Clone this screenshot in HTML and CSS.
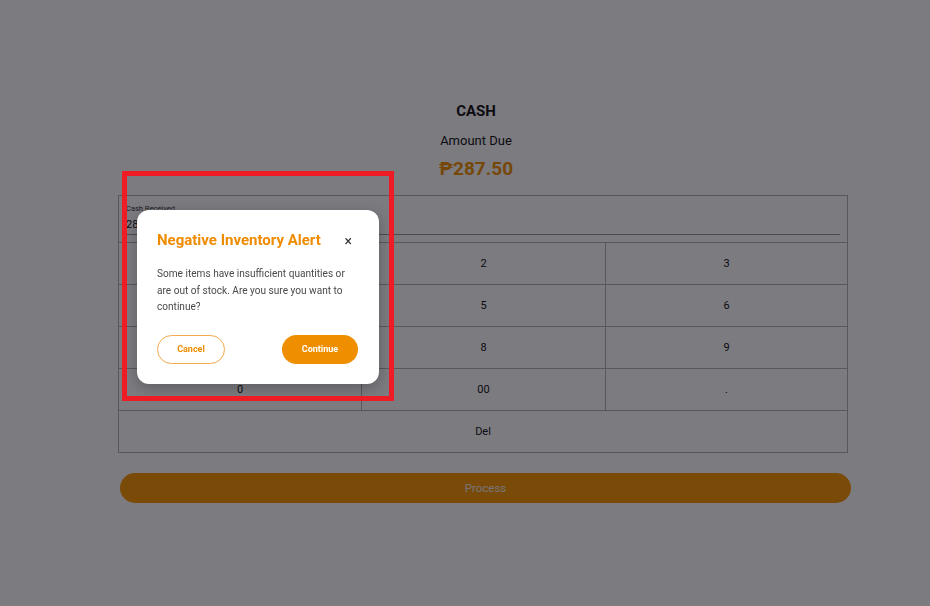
FILE: index.html
```html
<!DOCTYPE html>
<html lang="en">
<head>
  <meta charset="UTF-8" />
  <title>POS - Cash Payment</title>
  <link rel="stylesheet" href="styles.css">
</head>
<body>

  <main class="payment">
    <div class="summary">
      <h2 class="method">CASH</h2>
      <div class="due-label">Amount Due</div>
      <div class="due-amount">₱287.50</div>
    </div>

    <div class="keypad">
      <div class="cash-field">
        <label>Cash Received</label>
        <div class="cash-value">287.50</div>
      </div>
      <div class="keys">
        <button class="key">1</button>
        <button class="key">2</button>
        <button class="key">3</button>
        <button class="key">4</button>
        <button class="key">5</button>
        <button class="key">6</button>
        <button class="key">7</button>
        <button class="key">8</button>
        <button class="key">9</button>
        <button class="key">0</button>
        <button class="key">00</button>
        <button class="key">.</button>
        <button class="key wide">Del</button>
      </div>
    </div>

    <button class="process-btn">Process</button>
  </main>

  <!-- Confirm dialog -->
  <div class="backdrop">
    <div class="dialog">
      <div class="dialog-head">
        <h3>Negative Inventory Alert</h3>
        <span class="close">&times;</span>
      </div>
      <p>Some items have insufficient quantities or are out of stock. Are you sure you want to continue?</p>
      <div class="dialog-actions">
        <button class="btn-cancel">Cancel</button>
        <button class="btn-continue">Continue</button>
      </div>
    </div>
  </div>

  <!-- review marker -->
  <div class="marker"></div>

</body>
</html>
```

FILE: styles.css
```css
/* Base */
* {
  margin: 0; padding: 0; box-sizing: border-box;
}
body {
  font-family: Roboto, "Liberation Sans", Arial, sans-serif;
  background: #fff;
  color: #222;
  width: 930px;
  height: 606px;
  overflow: hidden;
}
button {
  font-family: inherit;
  border: none;
  background: none;
  cursor: pointer;
}

/* Payment page */
.payment {
  width: 733px;
  margin-left: 118px;
  padding-top: 101px;
}
.summary {
  text-align: center;
  padding-right: 17px;
}
.method {
  font-size: 15px;
  font-weight: bold;
  line-height: 20px;
  color: #111;
}
.due-label {
  margin-top: 11px;
  font-size: 13px;
  line-height: 17px;
  color: #111;
}
.due-amount {
  margin-top: 8px;
  font-size: 19px;
  font-weight: bold;
  line-height: 24px;
  color: #f39200;
}

.keypad {
  margin-top: 14px;
  width: 730px;
  border: 1px solid #b2b2b2;
}
.cash-field {
  padding: 8px 7px 7px 7px;
  border-bottom: 1px solid #b2b2b2;
}
.cash-field label {
  display: block;
  font-size: 7.5px;
  line-height: 9px;
  color: #333;
}
.cash-value {
  font-size: 11px;
  line-height: 15px;
  padding-top: 4px;
  padding-bottom: 2px;
  border-bottom: 1px solid #999;
  color: #111;
}
.keys {
  display: grid;
  grid-template-columns: 243px 244px 1fr;
}
.key {
  height: 42px;
  font-size: 11px;
  color: #111;
  border-right: 1px solid #b2b2b2;
  border-bottom: 1px solid #b2b2b2;
}
.key:nth-child(3n) {
  border-right: none;
}
.key.wide {
  grid-column: 1 / -1;
  height: 41px;
  border: none;
}

.process-btn {
  display: block;
  margin-top: 20px;
  margin-left: 2px;
  width: 731px;
  height: 30px;
  border-radius: 15px;
  background: #fb9800;
  color: #f4f0ee;
  font-size: 11.5px;
}

/* Dialog */
.backdrop {
  position: fixed;
  inset: 0;
  background: rgba(8, 6, 16, 0.53);
}
.dialog {
  position: absolute;
  left: 137px;
  top: 210px;
  width: 242px;
  padding: 21px 20px 20px;
  background: #fff;
  border-radius: 12px;
  box-shadow: 0 4px 14px rgba(0, 0, 0, 0.25);
}
.dialog-head {
  display: flex;
  justify-content: space-between;
  align-items: center;
}
.dialog-head h3 {
  font-size: 15px;
  font-weight: bold;
  line-height: 19px;
  color: #ef8b00;
}
.close {
  font-size: 14px;
  line-height: 14px;
  color: #333;
  margin-right: 7px;
}
.dialog p {
  margin-top: 16px;
  font-size: 10.1px;
  line-height: 16.5px;
  color: #4a4a4a;
}
.dialog-actions {
  margin-top: 19px;
  display: flex;
  justify-content: space-between;
}
.btn-cancel,
.btn-continue {
  height: 29px;
  border-radius: 15px;
  font-size: 9px;
  font-weight: bold;
}
.btn-cancel {
  width: 68px;
  border: 1px solid #f4a94d;
  color: #ec8d00;
}
.btn-continue {
  width: 76px;
  margin-right: 1px;
  background: #ef8f00;
  color: #fff;
}

.marker {
  position: absolute;
  left: 122px;
  top: 171px;
  width: 272px;
  height: 230px;
  border: 5px solid #ee1c25;
}
```
